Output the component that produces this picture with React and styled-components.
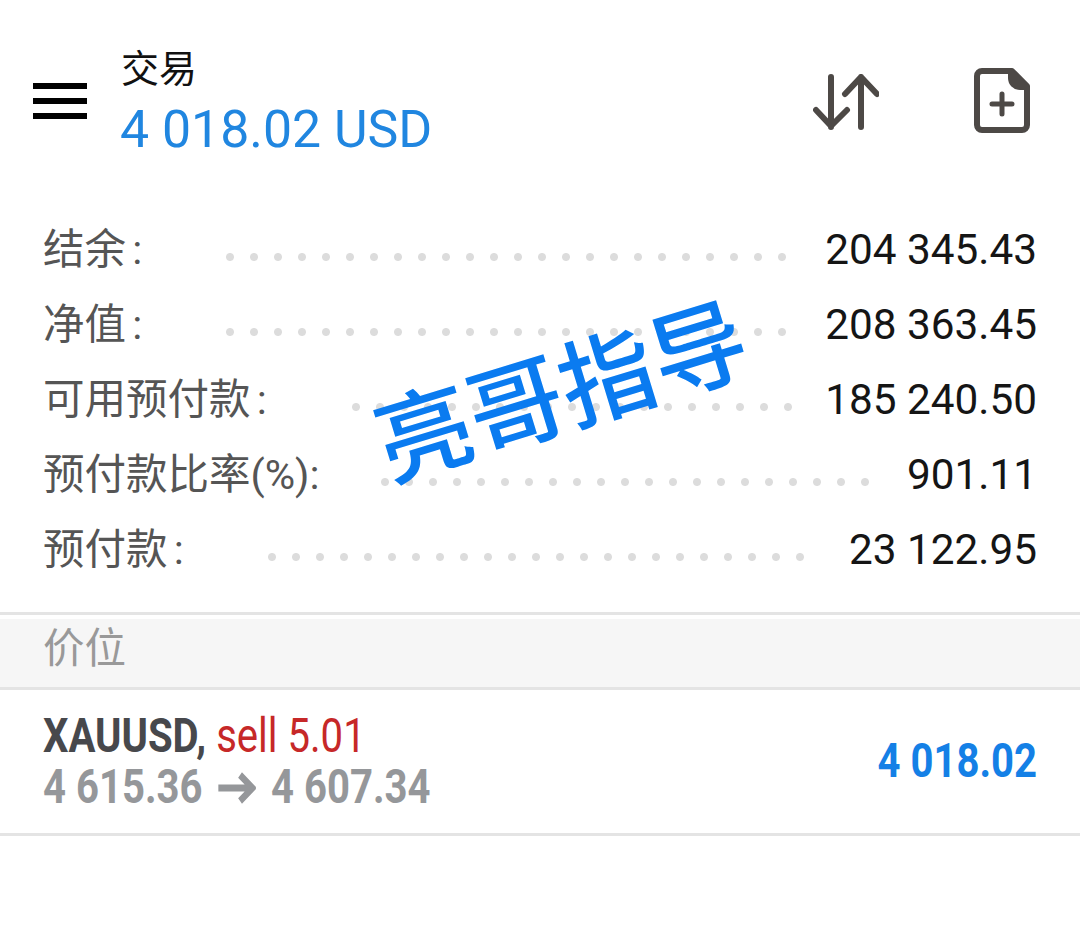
import React from 'react'
import styled, { createGlobalStyle } from 'styled-components'

const rows = [
    { label: '结余 :', value: '204 345.43', gapLeft: 76, gapRight: 30 },
    { label: '净值 :', value: '208 363.45', gapLeft: 76, gapRight: 30 },
    { label: '可用预付款 :', value: '185 240.50', gapLeft: 77, gapRight: 24 },
    { label: '预付款比率(%):', value: '901.11', gapLeft: 53, gapRight: 33 },
    { label: '预付款 :', value: '23 122.95', gapLeft: 76, gapRight: 36 },
]

function App() {
    return (
        <Page>
            <GlobalStyle />
            <Header>
                <Burger>
                    <span />
                    <span />
                    <span />
                </Burger>
                <TitleBlock>
                    <Title>交易</Title>
                    <Profit>4 018.02 USD</Profit>
                </TitleBlock>
                <Actions>
                    <svg width="66" height="56" viewBox="0 0 66 56" fill="none" stroke="#4d4946" strokeWidth="6" strokeLinecap="round" strokeLinejoin="round">
                        <path d="M18 3V53M3 36L18 52L34 36" />
                        <path d="M48 3V53M32 20L48 3L64 20" />
                    </svg>
                    <svg width="56" height="66" viewBox="0 0 56 66" fill="none">
                        <path d="M8 3H38L53 18V57a5 5 0 0 1-5 5H8a5 5 0 0 1-5-5V8a5 5 0 0 1 5-5Z" stroke="#4d4946" strokeWidth="6" strokeLinejoin="round" />
                        <path d="M34 3H39L53 17V22H46A12 12 0 0 1 34 10Z" fill="#4d4946" />
                        <path d="M18 36H38M28 26V46" stroke="#4d4946" strokeWidth="5" strokeLinecap="round" />
                    </svg>
                </Actions>
            </Header>

            <Summary>
                {rows.map(row => (
                    <Row key={row.label}>
                        <Label>{row.label}</Label>
                        <Dots $left={row.gapLeft} $right={row.gapRight} />
                        <Value>{row.value}</Value>
                    </Row>
                ))}
                <Watermark>亮哥指导</Watermark>
            </Summary>

            <SectionHead>价位</SectionHead>

            <Position>
                <PositionInfo>
                    <Line>
                        <Symbol>XAUUSD,</Symbol> <Side>sell 5.01</Side>
                    </Line>
                    <Line $muted>
                        4 615.36
                        <ArrowIcon width="46" height="32" viewBox="0 0 46 32" fill="none" stroke="#95979a" strokeWidth="7">
                            <path d="M1 16H42M27 3L42 16L27 29" />
                        </ArrowIcon>
                        4 607.34
                    </Line>
                </PositionInfo>
                <Pnl>4 018.02</Pnl>
            </Position>
        </Page>
    )
}

export default App

const GlobalStyle = createGlobalStyle`
    body {
        margin: 0;
        background: #fff;
        font-family: Roboto, "Noto Sans CJK SC", sans-serif;
    }
`

const Page = styled.div`
    width: 1080px;
    height: 941px;
    overflow: hidden;
    background: #fff;
`

const Header = styled.header`
    height: 212px;
    box-sizing: border-box;
    padding: 44px 50px 0 33px;
    display: flex;
    align-items: flex-start;
`

const Burger = styled.div`
    width: 54px;
    margin-top: 39px;
    display: flex;
    flex-direction: column;
    gap: 9px;

    span {
        height: 6px;
        background: #000;
    }
`

const TitleBlock = styled.div`
    margin-left: 34px;
    display: flex;
    flex-direction: column;
`

const Title = styled.div`
    font-size: 38px;
    line-height: 50px;
    color: #111;
`

const Profit = styled.div`
    font-size: 51.8px;
    line-height: 70px;
    margin: 1px 0 0 -1px;
    color: #2086e0;
`

const Actions = styled.div`
    margin-left: auto;
    margin-top: 24px;
    display: flex;
    align-items: flex-start;
    gap: 95px;

    svg:first-child {
        margin: 6px 0 0 -1px;
    }
`

const Summary = styled.section`
    position: relative;
    height: 400px;
    padding: 0 43px;
    border-bottom: 3px solid #e4e4e4;
`

const Row = styled.div`
    height: 75px;
    display: flex;
    align-items: center;
`

const Label = styled.span`
    font-size: 41.5px;
    line-height: 50px;
    word-spacing: -4px;
    color: #555;
    white-space: nowrap;
`

const Dots = styled.span`
    flex: 1;
    height: 10px;
    margin: 14px ${p => p.$right}px 0 ${p => p.$left}px;
    background-image: radial-gradient(circle, #dcdcdc 3.5px, transparent 4.5px);
    background-size: 24px 10px;
    background-repeat: repeat-x;
`

const Value = styled.span`
    font-size: 42.3px;
    color: #151515;
    white-space: nowrap;
`

const Watermark = styled.div`
    position: absolute;
    left: 369px;
    top: 119px;
    font-family: "Noto Sans CJK SC", sans-serif;
    font-size: 95.5px;
    line-height: 110px;
    font-weight: 500;
    color: #0a7bf0;
    white-space: nowrap;
    transform: rotate(-17deg);
`

const SectionHead = styled.div`
    margin-top: 4px;
    height: 71px;
    box-sizing: border-box;
    padding: 0 0 17px 43px;
    display: flex;
    align-items: center;
    background: #f6f6f6;
    border-bottom: 3px solid #e4e4e4;
    font-size: 41.5px;
    color: #999;
`

const Position = styled.div`
    height: 141px;
    padding: 0 43px 2px;
    display: flex;
    align-items: center;
    justify-content: space-between;
    border-bottom: 3px solid #e4e4e4;
`

const PositionInfo = styled.div`
    display: flex;
    flex-direction: column;
    align-items: flex-start;
`

const Line = styled.div`
    height: 51px;
    line-height: 51px;
    font-size: 48px;
    font-weight: ${p => (p.$muted ? 700 : 400)};
    color: ${p => (p.$muted ? '#95979a' : '#333')};
    white-space: nowrap;
    transform: scaleX(0.835);
    transform-origin: left center;
`

const ArrowIcon = styled.svg`
    margin: 0 18px;
    vertical-align: -1px;
`

const Symbol = styled.span`
    font-weight: 700;
    color: #47484c;
`

const Side = styled.span`
    color: #c62828;
`

const Pnl = styled.div`
    font-size: 48px;
    font-weight: 700;
    color: #1480e6;
    white-space: nowrap;
    transform: scaleX(0.835);
    transform-origin: right center;
`
